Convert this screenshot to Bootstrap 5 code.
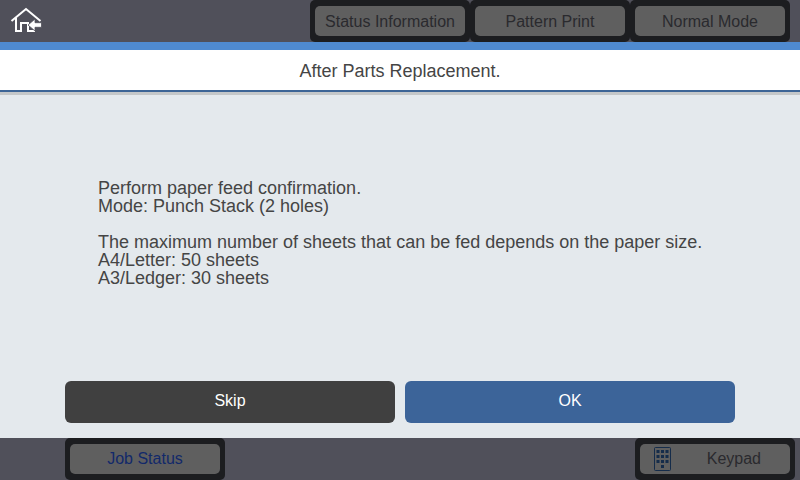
<!DOCTYPE html>
<html lang="en">
<head>
  <meta charset="UTF-8" />
  <title>After Parts Replacement</title>
  <link rel="stylesheet" href="https://cdn.jsdelivr.net/npm/bootstrap@5.3.0/dist/css/bootstrap.min.css" />
  <style>
    html, body { width: 800px; height: 480px; overflow: hidden; }
    body { font-family: "Liberation Sans", Arial, sans-serif; font-size: 18px; background: #e4e9ed; color: #454545; }
    .screen { width: 800px; height: 480px; }
    .top-bar { height: 42px; background: #50505a; padding-right: 10px; }
    .home-icon { margin-left: 10px; margin-top: 7px; }
    .hw-key { width: 160px; height: 42px; padding: 6px 5px; background: #1c1d20; border-radius: 5px; }
    .hw-key .btn { width: 150px; height: 30px; padding: 0; font-size: 16px; line-height: 1; background: #5f5f5f; color: #2a2a2e; border: 0; border-radius: 5px; }
    .top-bar .hw-key .btn { padding-top: 1px; }
    .hw-key .btn.job-key { color: #12296a; }
    .blue-strip { height: 8px; background: #4f8ad0; }
    .title-bar { height: 42px; background: #fff; border-bottom: 2px solid #3c6496; box-shadow: 0 3px 0 #c4c7c9; padding-top: 2px; }
    .msg-area { height: 289px; padding: 87px 65px 0 98px; line-height: 18px; }
    .msg-area p { margin-bottom: 18px; }
    .action-row { height: 57px; padding: 0 65px; gap: 10px; }
    .action-row .btn { width: 330px; height: 42px; padding: 0 0 2px; font-size: 16px; color: #fff; border: 0; border-radius: 6px; }
    .skip-btn { background: #404040; }
    .ok-btn { background: #3c6499; }
    .bottom-bar { height: 42px; background: #50505a; padding: 0 5px 0 65px; }
    .keypad-inner { padding-left: 14px !important; padding-right: 29px !important; }
  </style>
</head>
<body>
  <div class="screen d-flex flex-column">
    <div class="top-bar d-flex justify-content-between align-items-start">
      <svg class="home-icon" width="34" height="27" viewBox="0 0 34 27">
        <path d="M1.5 14 L16 2 L30.5 14 M6 11 V24 H11 V16 H18 V24 H25" fill="none" stroke="#fff" stroke-width="2"/>
        <path d="M18 18 L25 12 V15.7 H31.5 V20.3 H25 V24 Z" fill="#fff" stroke="#50505a" stroke-width=".8"/>
      </svg>
      <div class="d-flex">
        <div class="hw-key"><button type="button" class="btn">Status Information</button></div>
        <div class="hw-key"><button type="button" class="btn">Pattern Print</button></div>
        <div class="hw-key"><button type="button" class="btn">Normal Mode</button></div>
      </div>
    </div>
    <div class="blue-strip"></div>
    <div class="title-bar d-flex align-items-center justify-content-center">After Parts Replacement.</div>
    <div class="msg-area">
      <p>Perform paper feed confirmation.<br />Mode: Punch Stack (2 holes)</p>
      <p>The maximum number of sheets that can be fed depends on the paper size.<br />A4/Letter: 50 sheets<br />A3/Ledger: 30 sheets</p>
    </div>
    <div class="action-row d-flex align-items-start">
      <button type="button" class="btn skip-btn">Skip</button>
      <button type="button" class="btn ok-btn">OK</button>
    </div>
    <div class="bottom-bar d-flex justify-content-between">
      <div class="hw-key"><button type="button" class="btn job-key">Job Status</button></div>
      <div class="hw-key">
        <button type="button" class="btn keypad-inner d-flex align-items-center justify-content-between">
          <svg width="18" height="24" viewBox="0 0 18 24">
            <rect x=".5" y=".5" width="16" height="23" rx="1" fill="none" stroke="#152c4a"/>
            <g fill="#152c4a">
              <rect x="2.5" y="3" width="3" height="3"/><rect x="7" y="3" width="3" height="3"/><rect x="11.5" y="3" width="3" height="3"/>
              <rect x="2.5" y="8" width="3" height="3"/><rect x="7" y="8" width="3" height="3"/><rect x="11.5" y="8" width="3" height="3"/>
              <rect x="2.5" y="13" width="3" height="3"/><rect x="7" y="13" width="3" height="3"/><rect x="11.5" y="13" width="3" height="3"/>
              <rect x="7" y="18" width="3" height="3"/>
            </g>
          </svg>
          <span>Keypad</span>
        </button>
      </div>
    </div>
  </div>
  <script src="https://cdn.jsdelivr.net/npm/bootstrap@5.3.0/dist/js/bootstrap.bundle.min.js"></script>
</body>
</html>
